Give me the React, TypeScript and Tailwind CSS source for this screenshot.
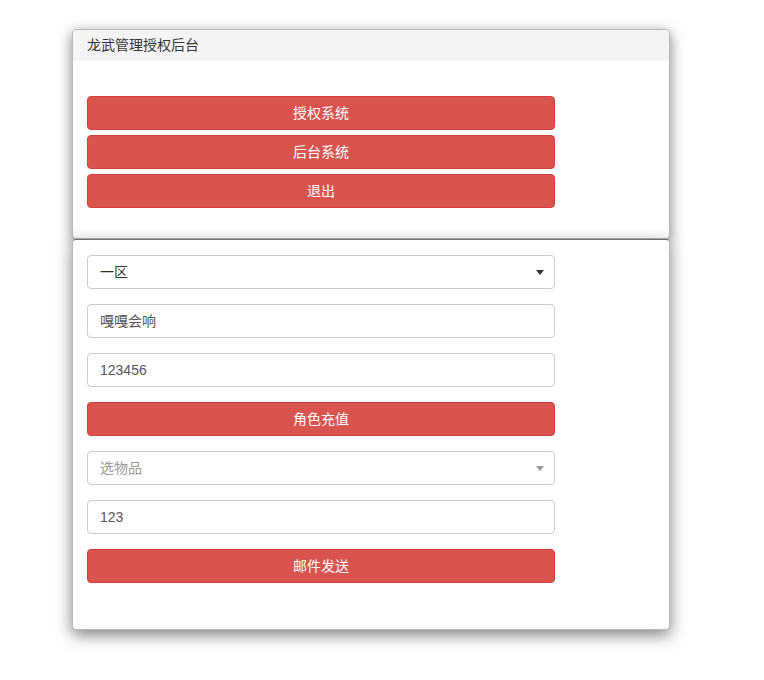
const font = {
  fontFamily: '"Liberation Sans", "Noto Sans CJK SC", sans-serif',
};

function RedButton({ label }: { label: string }) {
  return (
    <button className="h-[34px] w-full rounded-[4px] border border-[#d43f3a] bg-[#d9534f] text-[14px] text-white">
      {label}
    </button>
  );
}

function Field({ value }: { value: string }) {
  return (
    <div className="flex h-[34px] w-full items-center rounded-[4px] border border-[#cccccc] bg-white px-3 text-[14px] text-[#555555]">
      {value}
    </div>
  );
}

function Select({ value, placeholder }: { value?: string; placeholder?: string }) {
  return (
    <div className="flex h-[34px] w-full items-center justify-between rounded-[4px] border border-[#cccccc] bg-white pl-3 pr-[10px] text-[14px]">
      <span className={value ? "text-[#333333]" : "text-[#999999]"}>{value ?? placeholder}</span>
      <span
        className={
          "h-0 w-0 border-x-[4px] border-t-[5px] border-x-transparent " +
          (value ? "border-t-[#333333]" : "border-t-[#999999]")
        }
      />
    </div>
  );
}

export default function App() {
  return (
    <div className="min-h-[680px] bg-white pt-[29px] pl-[72px]" style={font}>
      <div className="w-[598px]">
        <div className="rounded-[4px] border border-[#b8b8b8] bg-white shadow-[0_4px_14px_rgba(0,0,0,0.5)]">
          <div className="flex h-[31px] items-center rounded-t-[4px] bg-[#f4f4f4] px-[14px] text-[14px] text-[#333333]">
            龙武管理授权后台
          </div>
          <div className="px-[14px] pt-[35px] pb-[30px]">
            <div className="flex w-[468px] flex-col gap-[5px]">
              <RedButton label="授权系统" />
              <RedButton label="后台系统" />
              <RedButton label="退出" />
            </div>
          </div>
        </div>

        <div className="rounded-[4px] border border-[#b8b8b8] border-t-[#707070] bg-white shadow-[0_5px_16px_rgba(0,0,0,0.5)]">
          <div className="flex w-[496px] flex-col gap-[15px] px-[14px] pt-[15px] pb-[46px]">
            <Select value="一区" />
            <Field value="嘎嘎会响" />
            <Field value="123456" />
            <RedButton label="角色充值" />
            <Select placeholder="选物品" />
            <Field value="123" />
            <RedButton label="邮件发送" />
          </div>
        </div>
      </div>
    </div>
  );
}
